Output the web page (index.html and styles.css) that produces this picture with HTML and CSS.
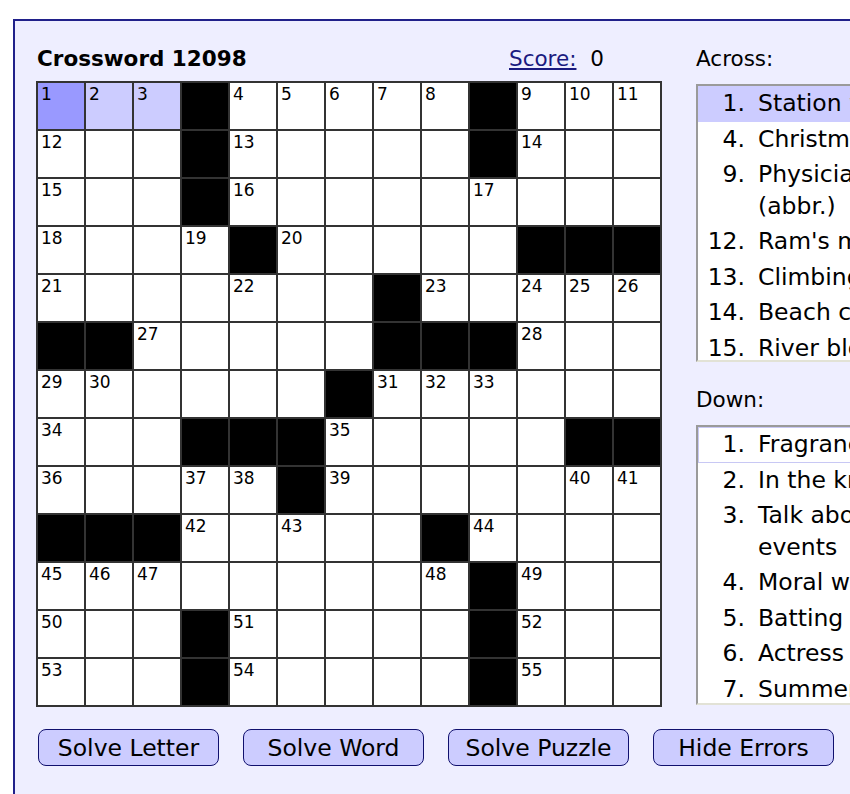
FILE: index.html
```html
<!DOCTYPE html>
<html lang="en">
<head>
    <meta charset="UTF-8">
    <meta name="viewport" content="width=device-width, initial-scale=1.0">
    <title>Crossword 12098</title>
    <link rel="stylesheet" href="styles.css">
</head>
<body>
    <div class="puzzle">
        <div class="main">
            <div class="board">
                <div class="board-head">
                    <h1 class="title">Crossword 12098</h1>
                    <div class="score"><a href="#">Score:</a>&nbsp; <span id="score">0</span></div>
                </div>
                <div class="grid" id="grid">
                    <!-- cells are built by the script below -->
                </div>
            </div>

            <div class="clues">
                <div class="clue-label">Across:</div>
                <ul class="clue-list" id="across">
                    <li class="selected"><span class="num">1.</span><span class="text">Station wagon</span></li>
                    <li><span class="num">4.</span><span class="text">Christmas song</span></li>
                    <li><span class="num">9.</span><span class="text">Physician (abbr.)</span></li>
                    <li><span class="num">12.</span><span class="text">Ram's mate</span></li>
                    <li><span class="num">13.</span><span class="text">Climbing plant</span></li>
                    <li><span class="num">14.</span><span class="text">Beach color</span></li>
                    <li><span class="num">15.</span><span class="text">River blockage</span></li>
                </ul>

                <div class="clue-label down-label">Down:</div>
                <ul class="clue-list" id="down">
                    <li class="focused"><span class="num">1.</span><span class="text">Fragrance</span></li>
                    <li><span class="num">2.</span><span class="text">In the know</span></li>
                    <li><span class="num">3.</span><span class="text">Talk about events</span></li>
                    <li><span class="num">4.</span><span class="text">Moral wrong</span></li>
                    <li><span class="num">5.</span><span class="text">Batting order</span></li>
                    <li><span class="num">6.</span><span class="text">Actress Stone</span></li>
                    <li><span class="num">7.</span><span class="text">Summer drink</span></li>
                </ul>
            </div>
        </div>

        <div class="buttons">
            <button class="btn">Solve Letter</button>
            <button class="btn">Solve Word</button>
            <button class="btn">Solve Puzzle</button>
            <button class="btn">Hide Errors</button>
        </div>
    </div>

    <script>
        const layout = [
            "...#.....#...",
            "...#.....#...",
            "...#.........",
            "....#.....###",
            ".......#.....",
            "##.....###...",
            "......#......",
            "...###.....##",
            ".....#.......",
            "###.....#....",
            ".........#...",
            "...#.....#...",
            "...#.....#..."
        ];

        function isOpen(r, c) {
            return r >= 0 && r < 13 && c >= 0 && c < 13 && layout[r][c] === '.';
        }

        function buildGrid() {
            const grid = document.getElementById('grid');
            let n = 0;
            for (let r = 0; r < 13; r++) {
                for (let c = 0; c < 13; c++) {
                    const cell = document.createElement('div');
                    cell.className = 'cell';
                    if (!isOpen(r, c)) {
                        cell.classList.add('block');
                    } else {
                        const across = !isOpen(r, c - 1) && isOpen(r, c + 1);
                        const down = !isOpen(r - 1, c) && isOpen(r + 1, c);
                        if (across || down) {
                            n++;
                            const num = document.createElement('span');
                            num.className = 'cell-num';
                            num.innerText = n;
                            cell.appendChild(num);
                        }
                        if (r === 0 && c === 0) cell.classList.add('current');
                        else if (r === 0 && c < 3) cell.classList.add('word');
                    }
                    grid.appendChild(cell);
                }
            }
        }

        buildGrid();
    </script>
</body>
</html>
```

FILE: styles.css
```css
body {
    margin: 0;
    background: #fff;
    font-family: "DejaVu Sans", Verdana, sans-serif;
    color: #000;
    overflow: hidden;
}
.puzzle {
    width: 960px;
    margin: 19px 0 0 13px;
    padding: 26px 0 30px 22px;
    background: #eeeeff;
    border: 2px solid #20208a;
}
.main {
    display: flex;
    gap: 35px;
}
.board-head {
    display: grid;
    grid-template-columns: 472px 1fr;
    align-items: center;
    height: 24px;
    margin-bottom: 11px;
}
.title {
    margin: 0;
    font-size: 21.5px;
    font-weight: bold;
    line-height: 24px;
}
.score {
    font-size: 21.5px;
    line-height: 24px;
}
.score a {
    color: #1a1a80;
}
.grid {
    display: grid;
    grid-template-columns: repeat(13, 48px);
    grid-auto-rows: 48px;
    outline: 1px solid #333;
    width: max-content;
}
.cell {
    box-sizing: border-box;
    border: 1px solid #333;
    background: #fff;
    padding: 2px 0 0 3px;
}
.cell-num {
    display: block;
    font-size: 17px;
    line-height: 19px;
}
.cell.block {
    background: #000;
}
.cell.current {
    background: #9999ff;
}
.cell.word {
    background: #ccccff;
}
.clues {
    width: 280px;
}
.clue-label {
    font-size: 21.5px;
    line-height: 24px;
    margin-bottom: 13px;
}
.down-label {
    margin-top: 26px;
    margin-bottom: 13px;
}
.clue-list {
    list-style: none;
    margin: 0;
    padding: 0;
    height: 274px;
    overflow: hidden;
    background: #fff;
    border: 2px solid;
    border-color: #9a9a9a #e2e2d6 #e2e2d6 #9a9a9a;
    font-size: 23.5px;
}
#down {
    height: 276px;
}
.clue-list li {
    display: flex;
    padding: 2px 0;
    line-height: 31.5px;
}
.clue-list .num {
    width: 47px;
    text-align: right;
    flex-shrink: 0;
}
.clue-list .text {
    width: 195px;
    margin-left: 13px;
}
.clue-list li.selected {
    background: #ccccff;
}
.clue-list li.focused {
    outline: 1px solid #c8c8f4;
    outline-offset: -1px;
}
.buttons {
    display: flex;
    gap: 24px;
    margin-top: 23px;
    margin-left: 1px;
}
.btn {
    width: 181px;
    height: 37px;
    padding: 0;
    font-family: "DejaVu Sans", Verdana, sans-serif;
    font-size: 23.5px;
    color: #000;
    background: #ccccff;
    border: 1px solid #10106e;
    border-radius: 8px;
    cursor: pointer;
}
```
